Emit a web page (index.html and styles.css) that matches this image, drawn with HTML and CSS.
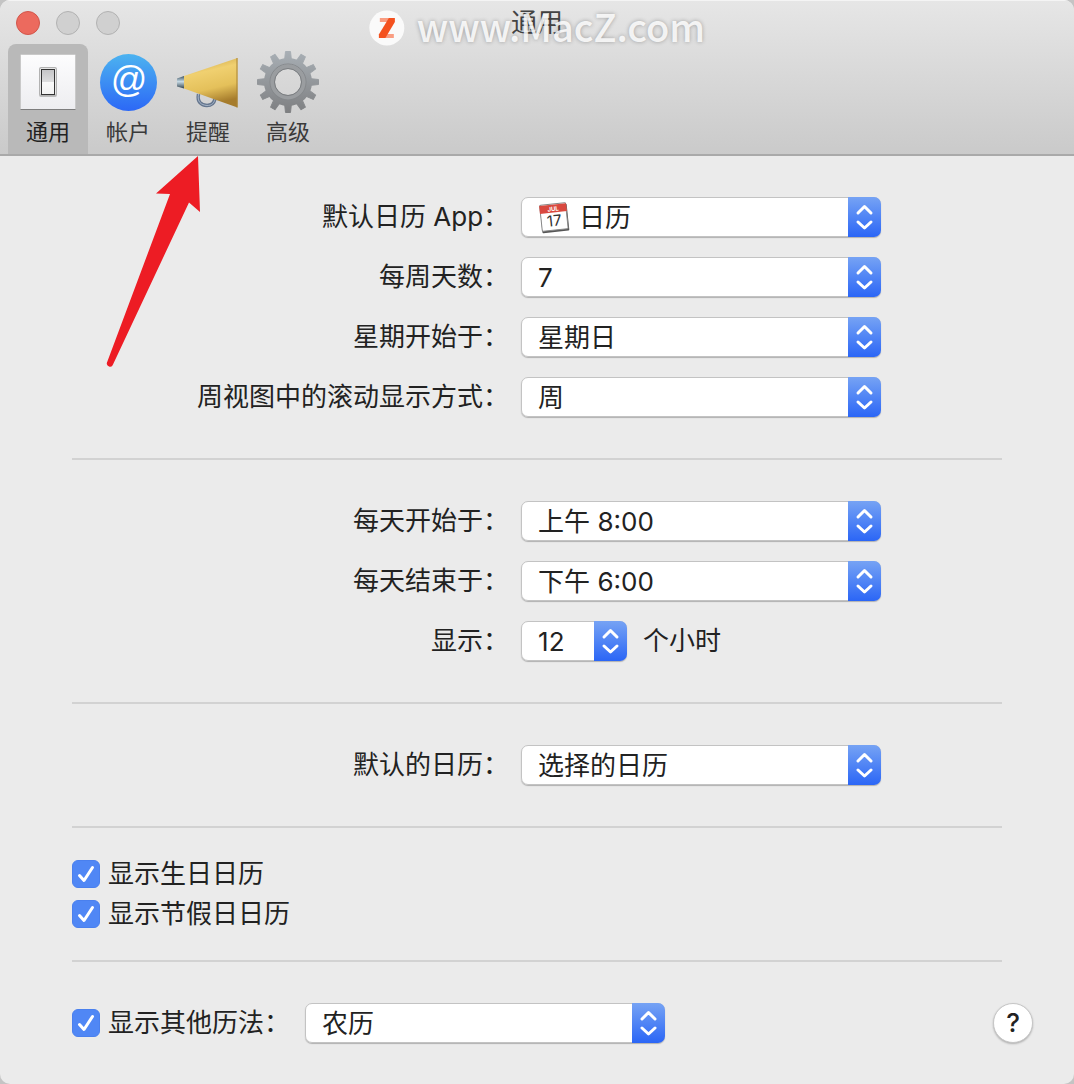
FILE: index.html
```html
<!DOCTYPE html>
<html lang="zh-CN">
<head>
  <meta charset="utf-8">
  <meta name="viewport" content="width=device-width, initial-scale=1">
  <title>通用</title>
  <link rel="stylesheet" href="styles.css">
</head>
<body>
  <!-- shared shapes -->
  <svg class="defs" width="0" height="0" aria-hidden="true">
    <symbol id="arrows" viewBox="0 0 33 40">
      <path d="M10 16 L16.5 9.5 L23 16 M10 25 L16.5 31 L23 25" fill="none" stroke="#fff" stroke-width="3" stroke-linecap="round" stroke-linejoin="round"/>
    </symbol>
    <symbol id="tick" viewBox="0 0 28 28">
      <path d="M7.500 15.500 L12 20.500 L20.500 7.500" fill="none" stroke="#fff" stroke-width="3" stroke-linecap="round" stroke-linejoin="round"/>
    </symbol>
  </svg>

  <div class="window">
    <header class="toolbar">
      <div class="titlebar">
        <div class="lights">
          <button class="light close" aria-label="关闭"></button>
          <button class="light" aria-label="最小化" disabled></button>
          <button class="light" aria-label="缩放" disabled></button>
        </div>
        <h1>通用</h1>
      </div>

      <nav class="tabs">
        <button class="tab active">
          <svg viewBox="0 0 64 64" aria-hidden="true">
            <defs>
              <linearGradient id="plate" x1="0" y1="0" x2="0" y2="1">
                <stop offset="0" stop-color="#fdfdfe"/>
                <stop offset="1" stop-color="#ededf0"/>
              </linearGradient>
              <linearGradient id="rocker" x1="0" y1="0" x2="0" y2="1">
                <stop offset="0" stop-color="#c4c4c6"/>
                <stop offset=".5" stop-color="#dededf"/>
                <stop offset=".5" stop-color="#fafafa"/>
                <stop offset="1" stop-color="#f2f2f2"/>
              </linearGradient>
            </defs>
            <rect x="4.500" y="4.500" width="55" height="55" rx="1" fill="url(#plate)" stroke="#c9c9c9"/>
            <path d="M4.500 59.500 H59.500" stroke="#7d7d7d"/>
            <rect x="23" y="17" width="18" height="30" rx="2" fill="#bbb"/>
            <rect x="24" y="18" width="16" height="27" rx="1" fill="#fff" stroke="#999" stroke-width=".5"/>
            <rect x="25.500" y="19.500" width="13" height="25" fill="url(#rocker)" stroke="#333"/>
          </svg>
          <span>通用</span>
        </button>
        <button class="tab">
          <svg viewBox="0 0 64 64" aria-hidden="true">
            <defs>
              <linearGradient id="blue" x1="0" y1="0" x2="0" y2="1">
                <stop offset="0" stop-color="#4cb3f0"/>
                <stop offset="1" stop-color="#2c68f6"/>
              </linearGradient>
            </defs>
            <circle cx="32.500" cy="32.500" r="28.500" fill="url(#blue)"/>
            <text class="at" x="33" y="42" text-anchor="middle">@</text>
          </svg>
          <span>帐户</span>
        </button>
        <button class="tab">
          <svg viewBox="0 0 64 64" aria-hidden="true">
            <defs>
              <linearGradient id="gold" x1="0" y1="0" x2=".25" y2="1">
                <stop offset=".1" stop-color="#cfa848"/>
                <stop offset=".35" stop-color="#f0d070"/>
                <stop offset=".7" stop-color="#e4c05a"/>
                <stop offset="1" stop-color="#a67c2c"/>
              </linearGradient>
              <linearGradient id="steel" x1="0" y1="0" x2="0" y2="1">
                <stop offset="0" stop-color="#3f5361"/>
                <stop offset=".45" stop-color="#c7dbe6"/>
                <stop offset="1" stop-color="#34444f"/>
              </linearGradient>
            </defs>
            <path d="M22.500 44 C21 52 25 55 31 55.500 C36 55.500 38 53 39 49" fill="none" stroke="#65768e" stroke-width="3.500"/>
            <path d="M22.500 44 C21 52 25 55 31 55.500 C36 55.500 38 53 39 49" fill="none" stroke="#a6b5c8" stroke-width="1"/>
            <path d="M1 28.500 L8 26 V38.500 L1 36.500 Z" fill="url(#steel)"/>
            <path d="M8 26 L61.500 8 V57.500 L8 38.500 Z" fill="url(#gold)"/>
            <path d="M61 8 V57.500" stroke="#a98335"/>
          </svg>
          <span>提醒</span>
        </button>
        <button class="tab">
          <svg viewBox="0 0 64 64" aria-hidden="true">
            <defs>
              <linearGradient id="metal" x1="0" y1="0" x2="0" y2="1">
                <stop offset="0" stop-color="#a9b0b6"/>
                <stop offset="1" stop-color="#7d7e80"/>
              </linearGradient>
              <path id="tooth" d="M28.500 11 L29.500 1.500 H34.500 L35.500 11 Z"/>
              <g id="teeth">
                <use href="#tooth"/>
                <use href="#tooth" transform="rotate(30 32 32)"/>
                <use href="#tooth" transform="rotate(60 32 32)"/>
                <use href="#tooth" transform="rotate(90 32 32)"/>
                <use href="#tooth" transform="rotate(120 32 32)"/>
                <use href="#tooth" transform="rotate(150 32 32)"/>
                <use href="#tooth" transform="rotate(180 32 32)"/>
                <use href="#tooth" transform="rotate(210 32 32)"/>
                <use href="#tooth" transform="rotate(240 32 32)"/>
                <use href="#tooth" transform="rotate(270 32 32)"/>
                <use href="#tooth" transform="rotate(300 32 32)"/>
                <use href="#tooth" transform="rotate(330 32 32)"/>
              </g>
              <mask id="gear">
                <g fill="#fff" stroke="#fff" stroke-linejoin="round"><use href="#teeth"/></g>
                <circle cx="32" cy="32" r="18.500" fill="none" stroke="#fff" stroke-width="11"/>
              </mask>
            </defs>
            <rect width="64" height="64" fill="url(#metal)" mask="url(#gear)"/>
            <circle cx="32" cy="32" r="18" fill="none" stroke="#85888b" stroke-width="1"/>
            <circle cx="32" cy="32" r="15.500" fill="none" stroke="#9a9da0" stroke-width="4"/>
            <circle cx="32" cy="32" r="13.500" fill="none" stroke="#7b7e81" stroke-width="1"/>
          </svg>
          <span>高级</span>
        </button>
      </nav>
    </header>

    <main>
      <section class="group form">
        <label for="app">默认日历 App：</label>
        <div class="popup">
          <select id="app" class="with-icon"><option>日历</option></select>
          <svg class="cal" viewBox="0 0 32 32" aria-hidden="true">
            <g transform="rotate(-6 16 16)">
              <rect x="3" y="3" width="27" height="27" rx="1" fill="#555"/>
              <rect x="3" y="2" width="26" height="26" rx="1" fill="#fff" stroke="#888"/>
              <path d="M2.500 10.500 V2.500 H29.500 V10.500 Z" fill="#d9493f"/>
              <text class="month" x="16" y="9" text-anchor="middle">JUL</text>
              <text class="day" x="16" y="24" text-anchor="middle">17</text>
            </g>
          </svg>
          <svg class="arrows"><use href="#arrows"/></svg>
        </div>

        <label for="days">每周天数：</label>
        <div class="popup">
          <select id="days"><option>7</option></select>
          <svg class="arrows"><use href="#arrows"/></svg>
        </div>

        <label for="weekStart">星期开始于：</label>
        <div class="popup">
          <select id="weekStart"><option>星期日</option></select>
          <svg class="arrows"><use href="#arrows"/></svg>
        </div>

        <label for="scroll">周视图中的滚动显示方式：</label>
        <div class="popup">
          <select id="scroll"><option>周</option></select>
          <svg class="arrows"><use href="#arrows"/></svg>
        </div>
      </section>

      <section class="group form">
        <label for="dayStart">每天开始于：</label>
        <div class="popup">
          <select id="dayStart"><option>上午 8:00</option></select>
          <svg class="arrows"><use href="#arrows"/></svg>
        </div>

        <label for="dayEnd">每天结束于：</label>
        <div class="popup">
          <select id="dayEnd"><option>下午 6:00</option></select>
          <svg class="arrows"><use href="#arrows"/></svg>
        </div>

        <label for="hours">显示：</label>
        <div class="inline">
          <div class="popup small">
            <select id="hours"><option>12</option></select>
            <svg class="arrows"><use href="#arrows"/></svg>
          </div>
          <span>个小时</span>
        </div>
      </section>

      <section class="group form">
        <label for="defaultCal">默认的日历：</label>
        <div class="popup">
          <select id="defaultCal"><option>选择的日历</option></select>
          <svg class="arrows"><use href="#arrows"/></svg>
        </div>
      </section>

      <section class="group checks">
        <label class="check">
          <input type="checkbox" checked>
          <svg class="tick"><use href="#tick"/></svg>
          显示生日日历
        </label>
        <label class="check">
          <input type="checkbox" checked>
          <svg class="tick"><use href="#tick"/></svg>
          显示节假日日历
        </label>
      </section>

      <section class="group bottom">
        <label class="check">
          <input type="checkbox" checked>
          <svg class="tick"><use href="#tick"/></svg>
          显示其他历法：
        </label>
        <div class="popup">
          <select aria-label="其他历法"><option>农历</option></select>
          <svg class="arrows"><use href="#arrows"/></svg>
        </div>
        <button class="help" aria-label="帮助">?</button>
      </section>
    </main>

    <div class="watermark">
      <svg viewBox="0 0 36 36" aria-hidden="true">
        <circle cx="18" cy="18" r="17.500" fill="#fafafa"/>
        <path d="M11 8 H22 V12 H11 Z M15 24 H25 V28 H15 Z" fill="#f99d82"/>
        <path d="M20 8 H26 V12 L16.500 28 H10 V24.500 Z" fill="#f4511e"/>
      </svg>
      <span>www.MacZ.com</span>
    </div>

    <svg class="pointer" viewBox="0 0 96 212" aria-hidden="true">
      <path d="M92 0 L94 56 L83 46.500 L7 208.500 A3 3 0 0 1 1 206.500 L64 38 L50 37.500 Z" fill="#ed1c24"/>
    </svg>
  </div>
</body>
</html>
```

FILE: styles.css
```css
* {
  box-sizing: border-box;
}

html {
  background: #c4c4c4;
}

body {
  margin: 0;
  font-family: Inter, "Noto Sans CJK SC", sans-serif;
  font-size: 26px;
  line-height: 40px;
  color: #222;
}

button,
select {
  font: inherit;
  color: inherit;
}

.defs {
  position: absolute;
}

.window {
  position: relative;
  min-height: 100vh;
  background: #ebebeb;
  border-radius: 10px;
  overflow: hidden;
}

/* toolbar */
.toolbar {
  background: linear-gradient(#e6e6e6, #cacaca);
  border-top: 1px solid #f4f4f4;
  border-bottom: 2px solid #a9a9a9;
}

.titlebar {
  display: grid;
  grid-template-columns: 1fr auto 1fr;
  align-items: center;
  height: 43px;
  padding: 0 16px;
}

.titlebar h1 {
  margin: 0;
  font-size: 26px;
  font-weight: 400;
  color: #444;
}

.lights {
  display: flex;
  gap: 16px;
}

.light {
  width: 24px;
  height: 24px;
  padding: 0;
  border: 1px solid #b2b2b2;
  border-radius: 50%;
  background: #d0d0d0;
}

.light.close {
  background: #ec6a5e;
  border-color: #d2564b;
}

.tabs {
  display: flex;
  padding: 0 8px;
}

.tab {
  display: flex;
  flex-direction: column;
  align-items: center;
  width: 80px;
  height: 110px;
  padding: 6px 0 0;
  border: none;
  border-radius: 8px 8px 0 0;
  background: none;
  font-size: 22px;
  line-height: 36px;
  color: #3a3a3a;
}

.tab.active {
  background: #b9b9b9;
  color: #222;
}

.tab svg {
  flex: none;
  width: 64px;
  height: 64px;
}

.at {
  font-family: "Liberation Sans", sans-serif;
  font-size: 36px;
  fill: #fff;
}

/* groups */
.group {
  margin: 0 72px;
  padding: 41px 0;
  border-bottom: 2px solid #d2d2d2;
}

.form {
  display: grid;
  grid-template-columns: 47% 1fr;
  column-gap: 12px;
  row-gap: 20px;
}

.form > label {
  text-align: right;
  white-space: nowrap;
}

.inline {
  display: flex;
  gap: 16px;
}

.popup {
  position: relative;
  width: 360px;
  height: 40px;
  border-radius: 7px;
  box-shadow: 0 1px 1px rgba(0, 0, 0, 0.25);
}

.popup.small {
  width: 106px;
}

.popup select {
  appearance: none;
  display: block;
  width: 100%;
  height: 40px;
  padding: 0 40px 0 16px;
  border: 1px solid #c3c3c3;
  border-radius: 7px;
  background: #fff;
}

.popup select.with-icon {
  padding-left: 57px;
}

.arrows {
  position: absolute;
  top: 0;
  right: 0;
  width: 33px;
  height: 40px;
  border-radius: 0 7px 7px 0;
  background: linear-gradient(#76a3f4, #2b66f6);
  pointer-events: none;
}

.cal {
  position: absolute;
  top: 5px;
  left: 17px;
  width: 32px;
  height: 32px;
  pointer-events: none;
}

.month {
  font-size: 6px;
  font-weight: 700;
  fill: #fff;
}

.day {
  font-size: 15px;
  fill: #333;
}

/* checkboxes */
.checks {
  display: flex;
  flex-direction: column;
  align-items: flex-start;
  gap: 12px;
  padding: 32px 0;
}

.check {
  position: relative;
  display: flex;
  align-items: center;
  gap: 8px;
  line-height: 28px;
}

.check input {
  appearance: none;
  width: 28px;
  height: 28px;
  margin: 0;
  border: 1px solid #b5b5b5;
  border-radius: 6px;
  background: #fff;
}

.check input:checked {
  border-color: #4a80ee;
  background: #5087f5;
}

.tick {
  position: absolute;
  left: 0;
  width: 28px;
  height: 28px;
  pointer-events: none;
}

input:not(:checked) + .tick {
  display: none;
}

.bottom {
  display: flex;
  align-items: center;
  gap: 15px;
  margin-right: 41px;
  border-bottom: none;
}

.help {
  width: 40px;
  height: 40px;
  margin-left: auto;
  padding: 0;
  border: 1px solid #c6c6c6;
  border-radius: 50%;
  background: #fff;
  box-shadow: 0 1px 2px rgba(0, 0, 0, 0.25);
  font-weight: 500;
  line-height: 38px;
}

/* overlays */
.watermark {
  position: absolute;
  top: 10px;
  left: 50%;
  display: flex;
  align-items: flex-start;
  gap: 12px;
  transform: translateX(-50%);
  font-family: "Noto Sans CJK SC", sans-serif;
  font-size: 38px;
  font-weight: 500;
  line-height: 32px;
  color: rgba(255, 255, 255, 0.85);
  text-shadow: 0 0 4px rgba(0, 0, 0, 0.3);
  pointer-events: none;
}

.watermark svg {
  width: 36px;
  height: 36px;
}

.pointer {
  position: absolute;
  top: 156px;
  left: 106px;
  width: 96px;
  height: 212px;
  pointer-events: none;
}
```
